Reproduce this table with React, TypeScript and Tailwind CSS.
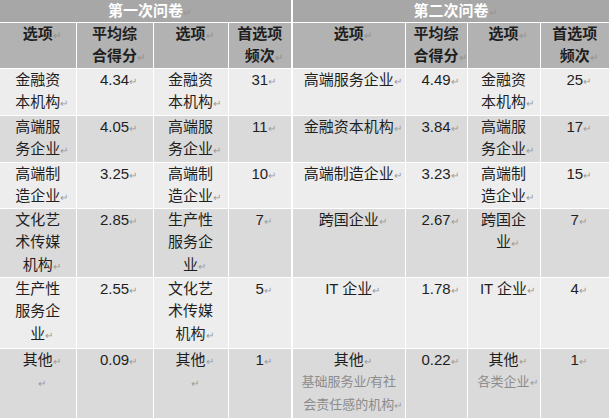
import React from "react";

type Line = { t: string; gray?: boolean; mark?: boolean };
type Cell = Line[];

const L = (t: string, mark = false, gray = false): Line => ({ t, mark, gray });

// each data row: 8 cells, each cell a list of lines
const rows: { h: string; bg: string; cells: Cell[] }[] = [
  {
    h: "h-[47px]",
    bg: "bg-[#ededed]",
    cells: [
      [L("金融资"), L("本机构", true)],
      [L("4.34", true)],
      [L("金融资"), L("本机构", true)],
      [L("31", true)],
      [L("高端服务企业", true)],
      [L("4.49", true)],
      [L("金融资"), L("本机构", true)],
      [L("25", true)],
    ],
  },
  {
    h: "h-[47px]",
    bg: "bg-[#dadada]",
    cells: [
      [L("高端服"), L("务企业", true)],
      [L("4.05", true)],
      [L("高端服"), L("务企业", true)],
      [L("11", true)],
      [L("金融资本机构", true)],
      [L("3.84", true)],
      [L("高端服"), L("务企业", true)],
      [L("17", true)],
    ],
  },
  {
    h: "h-[46px]",
    bg: "bg-[#ededed]",
    cells: [
      [L("高端制"), L("造企业", true)],
      [L("3.25", true)],
      [L("高端制"), L("造企业", true)],
      [L("10", true)],
      [L("高端制造企业", true)],
      [L("3.23", true)],
      [L("高端制"), L("造企业", true)],
      [L("15", true)],
    ],
  },
  {
    h: "h-[69px]",
    bg: "bg-[#dadada]",
    cells: [
      [L("文化艺"), L("术传媒"), L("机构", true)],
      [L("2.85", true)],
      [L("生产性"), L("服务企"), L("业", true)],
      [L("7", true)],
      [L("跨国企业", true)],
      [L("2.67", true)],
      [L("跨国企"), L("业", true)],
      [L("7", true)],
    ],
  },
  {
    h: "h-[71px]",
    bg: "bg-[#ededed]",
    cells: [
      [L("生产性"), L("服务企"), L("业", true)],
      [L("2.55", true)],
      [L("文化艺"), L("术传媒"), L("机构", true)],
      [L("5", true)],
      [L("IT 企业", true)],
      [L("1.78", true)],
      [L("IT 企业", true)],
      [L("4", true)],
    ],
  },
  {
    h: "h-[70px]",
    bg: "bg-[#dadada]",
    cells: [
      [L("其他", true), L("", true)],
      [L("0.09", true)],
      [L("其他", true), L("", true)],
      [L("1", true)],
      [L("其他", true), L("基础服务业/有社", false, true), L("会责任感的机构", true, true)],
      [L("0.22", true)],
      [L("其他", true), L("各类企业", true, true)],
      [L("1", true)],
    ],
  },
];

const Mark = () => (
  <span className="inline-block w-0 overflow-visible whitespace-nowrap text-[10px] text-[#9a9a9a] align-baseline">
    ↵
  </span>
);

const CellLines = ({ lines, bold }: { lines: Line[]; bold?: boolean }) => (
  <div className={bold ? "font-bold" : ""}>
    {lines.map((l, i) => (
      <div
        key={i}
        className={
          "h-[22.5px] leading-[22.5px] whitespace-nowrap text-center " +
          (l.gray ? "text-[13px] text-[#8c8c8c]" : "text-[15px] text-[#1f1f1f]")
        }
      >
        {l.t}
        {l.mark && <Mark />}
      </div>
    ))}
  </div>
);

const widths = ["w-[76px]", "w-[77px]", "w-[75px]", "w-[64px]", "w-[113px]", "w-[62px]", "w-[73px]", "w-[69px]"];

const headers: Line[][] = [
  [L("选项", true)],
  [L("平均综"), L("合得分", true)],
  [L("选项", true)],
  [L("首选项"), L("频次", true)],
];

export default function App() {
  return (
    <div
      className="w-[609px] h-[418px] overflow-hidden bg-white"
      style={{ fontFamily: '"Liberation Sans", "Noto Sans CJK SC", sans-serif' }}
    >
      <table className="table-fixed border-collapse w-[609px]">
        <colgroup>
          {widths.map((w, i) => (
            <col key={i} className={w} />
          ))}
        </colgroup>
        <tbody>
          <tr className="h-[22px] bg-[#a7a7a7]">
            <td colSpan={4} className="p-0 border-b border-white border-r-2 text-center align-middle">
              <div className="h-[21px] leading-[21px] text-[15px] font-bold text-white">
                第一次问卷
                <Mark />
              </div>
            </td>
            <td colSpan={4} className="p-0 border-b border-white text-center align-middle">
              <div className="h-[21px] leading-[21px] text-[15px] font-bold text-white">
                第二次问卷
                <Mark />
              </div>
            </td>
          </tr>
          <tr className="h-[46px] bg-[#b2b2b2]">
            {[0, 1, 2, 3, 4, 5, 6, 7].map((i) => (
              <td
                key={i}
                className={
                  "p-0 align-top border-b border-white " +
                  (i === 3 ? "border-r-2" : i === 7 ? "" : "border-r")
                }
              >
                <CellLines lines={headers[i % 4]} bold />
              </td>
            ))}
          </tr>
          {rows.map((r, ri) => (
            <tr key={ri} className={r.h + " " + r.bg}>
              {r.cells.map((c, i) => (
                <td
                  key={i}
                  className={
                    "p-0 align-top border-b border-white " +
                    (i === 3 ? "border-r-2" : i === 7 ? "" : "border-r")
                  }
                >
                  <CellLines lines={c} />
                </td>
              ))}
            </tr>
          ))}
        </tbody>
      </table>
    </div>
  );
}
